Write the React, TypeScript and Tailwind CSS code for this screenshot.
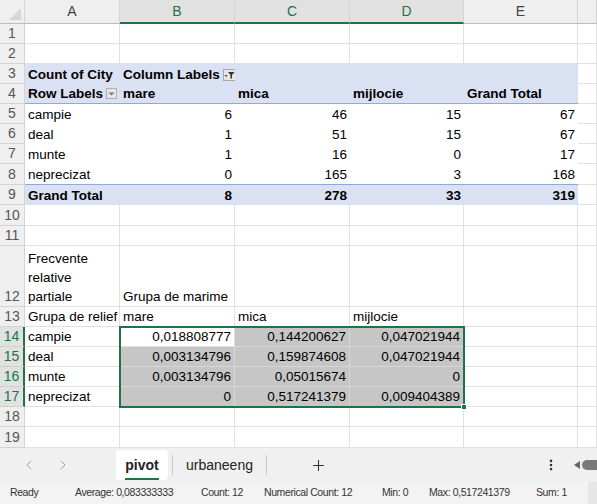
import React from "react";
import { ChevronLeft, ChevronRight, Plus, EllipsisVertical } from "lucide-react";

const W = [95, 115, 115, 114, 114, 19];
const GRID = "border-[#e1e1e1]";

type CellProps = {
  w: number;
  cls?: string;
  right?: boolean;
  children?: React.ReactNode;
};

function Cell({ w, cls = "", right, children }: CellProps) {
  return (
    <div
      style={{ width: w }}
      className={`flex h-full shrink-0 items-end overflow-visible whitespace-nowrap px-[3px] leading-[19px] ${
        right ? "justify-end" : "justify-start"
      } ${cls}`}
    >
      {children}
    </div>
  );
}

function RowHead({ n, sel }: { n: number; sel?: boolean }) {
  return (
    <div
      className={`flex h-full w-[25px] shrink-0 items-end justify-center border-b text-[14px] leading-[19px] ${
        sel
          ? "border-r-2 border-b-[#d0d0d0] border-r-[#217346] bg-[#e1e1e1] text-[#217346]"
          : "border-r border-[#d4d4d4] bg-[#efefef] text-[#555]"
      }`}
    >
      {n}
    </div>
  );
}

function Row({ h, children }: { h: number; children: React.ReactNode }) {
  return (
    <div style={{ height: h }} className="flex">
      {children}
    </div>
  );
}

const plain = `border-r border-b ${GRID}`;

function EmptyRow({ n, h = 20 }: { n: number; h?: number }) {
  return (
    <Row h={h}>
      <RowHead n={n} />
      {W.map((w, i) => (
        <Cell key={i} w={w} cls={plain} />
      ))}
    </Row>
  );
}

function FilterBtn() {
  return (
    <span className="ml-[3px] mb-[3px] flex h-[12px] w-[13px] items-center justify-center border border-[#a6a6a6] bg-[#e6e6e6]">
      <svg width="11" height="10" viewBox="0 0 11 10">
        <path d="M0.5 5 L3.5 5 L2 7 Z" fill="#444" />
        <path d="M4 2 L10.5 2 L8 5 L8 8.5 L6.5 8.5 L6.5 5 Z" fill="#333" />
      </svg>
    </span>
  );
}

function DropBtn() {
  return (
    <span className="absolute left-[81px] bottom-[4px] flex h-[11px] w-[11px] items-center justify-center border border-[#b0b0b0] bg-[#e6e6e6]">
      <svg width="7" height="4" viewBox="0 0 7 4">
        <path d="M0.5 0.5 L6.5 0.5 L3.5 3.5 Z" fill="#777" />
      </svg>
    </span>
  );
}

const pivotBlue = "bg-[#d9e1f2]";

const pivotData: [string, number, number, number, number][] = [
  ["campie", 6, 46, 15, 67],
  ["deal", 1, 51, 15, 67],
  ["munte", 1, 16, 0, 17],
  ["neprecizat", 0, 165, 3, 168],
];

const freq: [string, string, string, string][] = [
  ["campie", "0,018808777", "0,144200627", "0,047021944"],
  ["deal", "0,003134796", "0,159874608", "0,047021944"],
  ["munte", "0,003134796", "0,05015674", "0"],
  ["neprecizat", "0", "0,517241379", "0,009404389"],
];

export default function App() {
  const headers = ["A", "B", "C", "D", "E", ""];
  return (
    <div
      className="relative h-[504px] w-[597px] overflow-hidden bg-white text-[13.5px] text-black"
      style={{ fontFamily: '"Liberation Sans", Arial, sans-serif' }}
    >
      {/* Column header */}
      <div className="flex h-[24px]">
        <div className="relative h-full w-[25px] shrink-0 border-r border-b border-r-[#d4d4d4] border-b-[#bdbdbd] bg-[#efefef]">
          <svg className="absolute right-[3px] bottom-[3px]" width="12" height="12" viewBox="0 0 12 12">
            <path d="M12 0 L12 12 L0 12 Z" fill="#d6d6d6" />
          </svg>
        </div>
        {headers.map((h, i) => {
          const sel = i >= 1 && i <= 3;
          return (
            <div
              key={i}
              style={{ width: W[i] }}
              className={`flex h-full shrink-0 items-center justify-center border-r border-r-[#d4d4d4] text-[14px] ${
                sel
                  ? "border-b-2 border-b-[#217346] bg-[#e1e1e1] text-[#217346]"
                  : "border-b border-b-[#bdbdbd] bg-[#efefef] text-[#444]"
              }`}
            >
              {h}
            </div>
          );
        })}
      </div>

      <EmptyRow n={1} />
      <EmptyRow n={2} />

      {/* Row 3 */}
      <Row h={20}>
        <RowHead n={3} />
        <Cell w={W[0]} cls={`${pivotBlue} font-bold`}>Count of City</Cell>
        <Cell w={W[1]} cls={`${pivotBlue} font-bold`}>
          <span>Column Labels</span>
          <FilterBtn />
        </Cell>
        <Cell w={W[2]} cls={pivotBlue} />
        <Cell w={W[3]} cls={pivotBlue} />
        <Cell w={W[4]} cls={pivotBlue} />
        <Cell w={W[5]} cls={plain} />
      </Row>

      {/* Row 4 */}
      <Row h={20}>
        <RowHead n={4} />
        <Cell w={W[0]} cls={`${pivotBlue} relative border-b border-b-[#8ea9db] font-bold`}>
          Row Labels
          <DropBtn />
        </Cell>
        <Cell w={W[1]} cls={`${pivotBlue} border-b border-b-[#8ea9db] font-bold`}>mare</Cell>
        <Cell w={W[2]} cls={`${pivotBlue} border-b border-b-[#8ea9db] font-bold`}>mica</Cell>
        <Cell w={W[3]} cls={`${pivotBlue} border-b border-b-[#8ea9db] font-bold`}>mijlocie</Cell>
        <Cell w={W[4]} cls={`${pivotBlue} border-b border-b-[#8ea9db] font-bold`}>Grand Total</Cell>
        <Cell w={W[5]} cls={plain} />
      </Row>

      {pivotData.map((r, ri) => {
        const last = ri === pivotData.length - 1;
        const b = last ? "border-b border-b-[#8ea9db]" : "";
        return (
          <Row key={ri} h={last ? 21 : 20}>
            <RowHead n={5 + ri} />
            <Cell w={W[0]} cls={b}>{r[0]}</Cell>
            <Cell w={W[1]} cls={b} right>{r[1]}</Cell>
            <Cell w={W[2]} cls={b} right>{r[2]}</Cell>
            <Cell w={W[3]} cls={b} right>{r[3]}</Cell>
            <Cell w={W[4]} cls={b} right>{r[4]}</Cell>
            <Cell w={W[5]} cls={plain} />
          </Row>
        );
      })}

      {/* Row 9 grand total */}
      <Row h={20}>
        <RowHead n={9} />
        <Cell w={W[0]} cls={`${pivotBlue} font-bold`}>Grand Total</Cell>
        <Cell w={W[1]} cls={`${pivotBlue} font-bold`} right>8</Cell>
        <Cell w={W[2]} cls={`${pivotBlue} font-bold`} right>278</Cell>
        <Cell w={W[3]} cls={`${pivotBlue} font-bold`} right>33</Cell>
        <Cell w={W[4]} cls={`${pivotBlue} font-bold`} right>319</Cell>
        <Cell w={W[5]} cls={plain} />
      </Row>

      <EmptyRow n={10} h={21} />
      <EmptyRow n={11} />

      {/* Row 12 */}
      <Row h={61}>
        <RowHead n={12} />
        <Cell w={W[0]} cls={plain}>
          <span className="block w-[88px] whitespace-normal leading-[19px]">
            Frecvente relative partiale
          </span>
        </Cell>
        <Cell w={W[1]} cls={plain}>Grupa de marime</Cell>
        <Cell w={W[2]} cls={plain} />
        <Cell w={W[3]} cls={plain} />
        <Cell w={W[4]} cls={plain} />
        <Cell w={W[5]} cls={plain} />
      </Row>

      {/* Row 13 */}
      <Row h={20}>
        <RowHead n={13} />
        <Cell w={W[0]} cls={plain}>Grupa de relief</Cell>
        <Cell w={W[1]} cls={plain}>mare</Cell>
        <Cell w={W[2]} cls={plain}>mica</Cell>
        <Cell w={W[3]} cls={plain}>mijlocie</Cell>
        <Cell w={W[4]} cls={plain} />
        <Cell w={W[5]} cls={plain} />
      </Row>

      {freq.map((r, ri) => (
        <Row key={ri} h={20}>
          <RowHead n={14 + ri} sel />
          <Cell w={W[0]} cls={plain}>{r[0]}</Cell>
          <Cell
            w={W[1]}
            cls={`border-r border-b ${ri === 0 ? "bg-white border-[#e1e1e1]" : "bg-[#c6c6c6] border-[#d6d6d6]"}`}
            right
          >
            {r[1]}
          </Cell>
          <Cell w={W[2]} cls="border-r border-b border-[#d6d6d6] bg-[#c6c6c6]" right>
            {r[2]}
          </Cell>
          <Cell w={W[3]} cls="border-r border-b border-[#d6d6d6] bg-[#c6c6c6]" right>
            {r[3]}
          </Cell>
          <Cell w={W[4]} cls={plain} />
          <Cell w={W[5]} cls={plain} />
        </Row>
      ))}

      <EmptyRow n={18} />
      <EmptyRow n={19} h={21} />

      {/* selection outline */}
      <div className="pointer-events-none absolute left-[119px] top-[326px] h-[82px] w-[346px] border-2 border-[#217346]" />
      <div className="pointer-events-none absolute left-[461px] top-[404px] h-[6px] w-[6px] border border-white bg-[#217346]" />

      {/* Sheet tab bar */}
      <div className="flex h-[34px] items-center bg-[#f0f0f0]">
        <div className="flex w-[116px] items-center">
          <ChevronLeft className="ml-[21px] text-[#a0a0a0]" size={16} strokeWidth={1.5} />
          <ChevronRight className="ml-[18px] text-[#a0a0a0]" size={16} strokeWidth={1.5} />
        </div>
        <div className="relative flex h-[30px] w-[52px] items-center justify-center rounded-[4px] bg-white text-[14px] font-semibold text-[#222]">
          <span className="relative">
            pivot
            <span className="absolute left-0 right-0 -bottom-[4px] h-[2px] bg-[#217346]" />
          </span>
        </div>
        <div className="ml-[4px] h-[20px] w-px bg-[#c8c8c8]" />
        <div className="ml-[13px] text-[14px] text-[#222]">urbaneeng</div>
        <div className="ml-[13px] h-[20px] w-px bg-[#c8c8c8]" />
        <Plus className="ml-[43px] text-[#333]" size={17} strokeWidth={1.5} />
        <div className="flex-1" />
        <EllipsisVertical className="mr-[16px] text-[#333]" size={14} strokeWidth={2.5} />
        <svg width="6" height="8" viewBox="0 0 6 8" className="mr-[2px]">
          <path d="M6 0 L6 8 L0 4 Z" fill="#666" />
        </svg>
        <div className="h-[10px] w-[15px] rounded-l-[5px] bg-[#7a7a7a]" />
      </div>

      {/* Status bar */}
      <div className="flex h-[22px] items-center bg-[#f3f3f3] text-[10.5px] tracking-[-0.4px] text-[#333]">
        <span className="ml-[10px] w-[65px] shrink-0">Ready</span>
        <span className="w-[126px] shrink-0">Average: 0,083333333</span>
        <span className="w-[63px] shrink-0">Count: 12</span>
        <span className="w-[118px] shrink-0">Numerical Count: 12</span>
        <span className="w-[47px] shrink-0">Min: 0</span>
        <span className="w-[107px] shrink-0">Max: 0,517241379</span>
        <span className="w-[52px] shrink-0">Sum: 1</span>
        <div className="h-full flex-1 bg-[#e6e6e6]" />
      </div>
    </div>
  );
}
